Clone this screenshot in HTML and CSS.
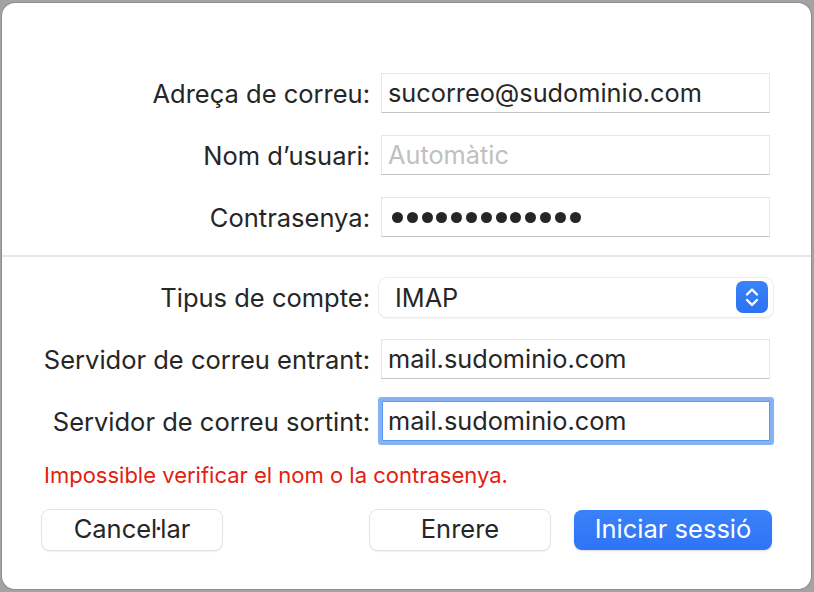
FILE: index.html
```html
<!DOCTYPE html>
<html lang="ca">
<head>
<meta charset="utf-8">
<link rel="stylesheet" href="styles.css">
</head>
<body>
<div class="window">
  <div class="form top">
    <label class="label">Adreça de correu:</label>
    <div class="field"><span class="value">sucorreo@sudominio.com</span></div>
    <label class="label">Nom d’usuari:</label>
    <div class="field"><span class="placeholder">Automàtic</span></div>
    <label class="label">Contrasenya:</label>
    <div class="field"><span class="dots"><i></i><i></i><i></i><i></i><i></i><i></i><i></i><i></i><i></i><i></i><i></i><i></i><i></i></span></div>
  </div>
  <div class="sep"></div>
  <div class="form bottom">
    <label class="label">Tipus de compte:</label>
    <div class="select">
      <span class="value">IMAP</span>
      <span class="stepper">
        <svg width="32" height="32" viewBox="0 0 32 32"><path d="M11 13.5 L16 8.5 L21 13.5" fill="none" stroke="#fff" stroke-width="2.4" stroke-linecap="round" stroke-linejoin="round"/><path d="M11 19 L16 24 L21 19" fill="none" stroke="#fff" stroke-width="2.4" stroke-linecap="round" stroke-linejoin="round"/></svg>
      </span>
    </div>
    <label class="label">Servidor de correu entrant:</label>
    <div class="field"><span class="value">mail.sudominio.com</span></div>
    <label class="label">Servidor de correu sortint:</label>
    <div class="field focus"><span class="value">mail.sudominio.com</span></div>
  </div>
  <p class="error">Impossible verificar el nom o la contrasenya.</p>
  <div class="buttons">
    <button class="btn">Cancel·lar</button>
    <div class="spacer"></div>
    <button class="btn">Enrere</button>
    <button class="btn primary">Iniciar sessió</button>
  </div>
</div>
</body>
</html>
```
FILE: styles.css
```css
html, body {
  margin: 0;
  padding: 0;
  background: #a3a3a3;
  width: 814px;
  height: 592px;
  overflow: hidden;
}
.window {
  margin: 3px 0 0 2px;
  width: 809px;
  height: 586px;
  background: #fff;
  border-radius: 13px;
  box-shadow: 0 0 0 1px #8e8e8e;
  font-family: Inter, "Liberation Sans", sans-serif;
  color: #262626;
  box-sizing: border-box;
  padding-top: 70px;
}
.form {
  display: grid;
  grid-template-columns: 368px 389px;
  grid-auto-rows: 40px;
  column-gap: 11px;
  row-gap: 22px;
  align-items: center;
}
.label {
  text-align: right;
  font-size: 25.5px;
  color: #262626;
}
.field {
  height: 40px;
  box-sizing: border-box;
  border: 1px solid #e6e6e6;
  border-bottom: 1px solid #c4c4c4;
  background: #fff;
  display: flex;
  align-items: center;
  padding-left: 6px;
  padding-bottom: 1px;
  font-size: 25.3px;
}
.value { color: #262626; }
.placeholder { color: #c0c0c0; }
.dots { display: flex; gap: 3.8px; padding-left: 4px; padding-top: 1px; }
.dots i {
  display: block;
  width: 11px;
  height: 11px;
  border-radius: 50%;
  background: #262626;
}
.sep {
  height: 2px;
  background: #e6e6e6;
  margin: 18px 0 20px;
}
.select {
  margin-left: -2px;
  width: 394px;
  height: 39px;
  box-sizing: border-box;
  border-radius: 8px;
  background: #fff;
  box-shadow: 0 0 0 1px #ececec, 0 1px 2px rgba(0,0,0,0.12);
  display: flex;
  align-items: center;
  justify-content: space-between;
  padding: 0 5px 0 16px;
  font-size: 25.3px;
}
.stepper {
  width: 32px;
  height: 32px;
  border-radius: 7px;
  background: linear-gradient(#3a83f8, #2c72f4);
  display: flex;
}
.field.focus {
  margin-left: 1px;
  border: 1px solid #5c97f0;
  box-shadow: 0 0 0 4px #86b3f7;
  border-radius: 1px;
  padding-left: 5px;
}
.error {
  margin: 22px 0 0 42px;
  font-size: 22px;
  color: #e3200e;
  line-height: 24px;
}
.buttons {
  display: flex;
  gap: 24px;
  padding: 0 39px 0 40px;
  margin-top: 23px;
}
.spacer { flex: 1; }
.btn {
  width: 180px;
  height: 40px;
  border: none;
  border-radius: 8px;
  background: #fff;
  box-shadow: 0 0 0 1px #e3e3e3, 0 1px 2px rgba(0,0,0,0.18);
  font-family: Inter, "Liberation Sans", sans-serif;
  font-size: 25.5px;
  color: #262626;
  padding: 0 0 3px;
}
.btn.primary {
  width: 198px;
  background: linear-gradient(#3a82f8, #2e74f5);
  color: #fff;
  box-shadow: 0 1px 2px rgba(0,0,0,0.15);
}
```
